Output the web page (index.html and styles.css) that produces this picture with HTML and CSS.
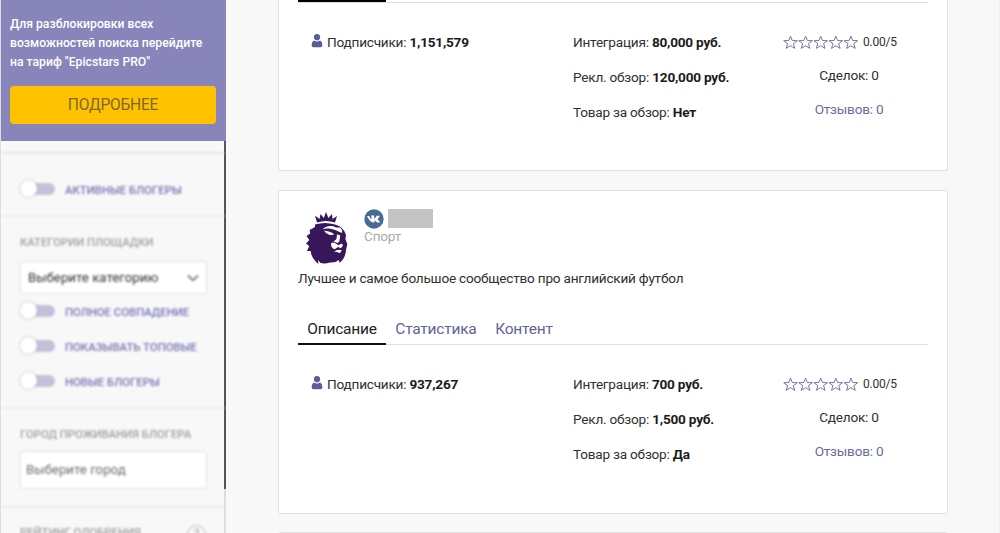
FILE: index.html
```html
<!DOCTYPE html>
<html lang="ru">
<head>
<meta charset="utf-8">
<title>Epicstars</title>
<link rel="stylesheet" href="styles.css">
</head>
<body>
<svg class="defs" width="0" height="0" aria-hidden="true">
  <symbol id="user" viewBox="0 0 11 14"><circle cx="5.5" cy="3.2" r="3.1"/><path d="M2.3 6.4Q5.5 8.7 8.7 6.4Q10.9 7.5 10.9 11Q10.9 13.2 9 13.2H2Q.1 13.2 .1 11Q.1 7.5 2.3 6.4Z"/></symbol>
  <symbol id="stars" viewBox="0 0 76 15">
    <g fill="none" stroke="#7477a0" stroke-width="1">
      <path id="star" d="M7.5 1.2L9.3 5.5L14.3 5.7L10.4 8.6L11.8 13.4L7.5 10.7L3.2 13.4L4.6 8.6L.7 5.7L5.7 5.5Z"/>
      <use href="#star" x="15.1"/><use href="#star" x="30.2"/><use href="#star" x="45.3"/><use href="#star" x="60.4"/>
    </g>
  </symbol>
</svg>
<div class="page">
  <aside class="sidebar">
    <section class="promo">
      <p>Для разблокировки всех<br>возможностей поиска перейдите<br>на тариф "Epicstars PRO"</p>
      <button class="more">ПОДРОБНЕЕ</button>
    </section>
    <div class="filters">
      <div class="filter-body">
        <section class="group active-group"><div class="toggle"><i class="switch"></i><span>АКТИВНЫЕ БЛОГЕРЫ</span></div></section>
        <section class="group category-group">
          <h3>КАТЕГОРИИ ПЛОЩАДКИ</h3>
          <div class="select"><span>Выберите категорию</span><svg width="12" height="8" viewBox="0 0 12 8"><path d="M1 1.5L6 6.3L11 1.5" fill="none" stroke="#777" stroke-width="1.8"/></svg></div>
          <div class="toggle"><i class="switch"></i><span>ПОЛНОЕ СОВПАДЕНИЕ</span></div>
          <div class="toggle"><i class="switch"></i><span>ПОКАЗЫВАТЬ ТОПОВЫЕ</span></div>
          <div class="toggle"><i class="switch"></i><span>НОВЫЕ БЛОГЕРЫ</span></div>
        </section>
        <section class="group city-group">
          <h3>ГОРОД ПРОЖИВАНИЯ БЛОГЕРА</h3>
          <div class="input">Выберите город</div>
        </section>
        <section class="group rating-group"><h3>РЕЙТИНГ ОДОБРЕНИЯ</h3><span class="help">?</span></section>
      </div>
      <div class="scrollbar"></div>
    </div>
  </aside>
  <main class="results">
    <article class="card first">
      <nav class="tabs"><a class="tab current"></a></nav>
      <div class="details">
        <div class="followers"><svg class="user"><use href="#user"/></svg><span>Подписчики: <b>1,151,579</b></span></div>
        <div class="prices"><p>Интеграция: <b>80,000 руб.</b></p><p>Рекл. обзор: <b>120,000 руб.</b></p><p>Товар за обзор: <b>Нет</b></p></div>
        <div class="rating"><div class="score"><svg class="stars"><use href="#stars"/></svg><span>0.00/5</span></div><p>Сделок: 0</p><a>Отзывов: 0</a></div>
      </div>
    </article>
    <article class="card second">
      <header class="profile">
        <svg class="avatar" viewBox="0 0 42 54">
          <path fill="#37165a" d="M11 10.5L9 3.5L13.5 7L14.5 2L17.8 6L20 0L22.4 6L26 2L26.5 7L31 4L29 10.5Q20 7.5 11 10.5Z"/>
          <path fill="#37165a" d="M9 12.5Q19 9.5 29 12.5Q38 15 40 23L39.4 27L41.3 32L40 38Q39.5 46 33.5 51L33 48Q29 51 24 50.5Q19 52 14.5 51L12 48L12.4 52Q5.2 46 4.7 39L1 39L3.2 34L0 31.5L3.3 28L.5 24L4.2 21.5L3.6 18L9 15Z"/>
          <g fill="#fff"><path d="M16.5 17.5Q20 13 27.5 14.2L30 15.5L34 15.5Q37 18 36 21L32.5 19.5Q28 17.2 23 16.5Q19 16 16.5 17.5Z"/><path d="M18 18.8Q24 18.8 28.3 22.3Q26 23.6 23.2 22.8Q20 22 18 18.8Z"/><path d="M31 22.3L34.3 23.5L33.3 29.5L31.5 31L27.5 29.5L30.5 27Z"/><path d="M25 31.2Q27.5 29.3 31 32.2L32.2 33.2L35.8 31.5L37 33.5L35 36.2L32.2 35L28.5 37.2Q25 36.3 25 31.2Z"/><path d="M28 39.8Q31.5 36.8 35.8 38.3L33.8 41.2Q31 39.2 28 39.8Z"/></g>
        </svg>
        <div class="identity">
          <div class="account"><svg class="vk" viewBox="0 0 20 20"><circle cx="10" cy="10" r="9.7" fill="#466c96"/><path fill="#fff" d="M3 7H5.3Q6 9.3 7.2 10.2Q8 9.4 7.2 7L6.8 6.5H10.2V9.8Q11.7 8.7 12.7 6.8H15.7Q15.8 8 13.5 10.3Q15.9 12.4 15.9 13.5H13.1Q11.7 12 10.7 11.5L10.3 13.6Q6.2 14 3 7Z"/></svg><span class="masked"></span></div>
          <span class="topic">Спорт</span>
        </div>
      </header>
      <p class="description">Лучшее и самое большое сообщество про английский футбол</p>
      <nav class="tabs"><a class="tab current">Описание</a><a class="tab">Статистика</a><a class="tab">Контент</a></nav>
      <div class="details">
        <div class="followers"><svg class="user"><use href="#user"/></svg><span>Подписчики: <b>937,267</b></span></div>
        <div class="prices"><p>Интеграция: <b>700 руб.</b></p><p>Рекл. обзор: <b>1,500 руб.</b></p><p>Товар за обзор: <b>Да</b></p></div>
        <div class="rating"><div class="score"><svg class="stars"><use href="#stars"/></svg><span>0.00/5</span></div><p>Сделок: 0</p><a>Отзывов: 0</a></div>
      </div>
    </article>
    <article class="card next"></article>
  </main>
</div>
</body>
</html>
```
FILE: styles.css
```css
* { box-sizing: border-box; }
body { margin: 0; height: 533px; overflow: hidden; background: #f8f8f8; color: #303030; font: 13.6px Roboto, "Liberation Sans", sans-serif; letter-spacing: -.22px; }
p, h3 { margin: 0; }
b { font-weight: 700; color: #1b1b1b; }
.defs { display: block; }
.page { display: flex; height: 533px; border-right: 1px solid #eeeeee; }
.sidebar { width: 226px; flex: none; height: 533px; overflow: hidden; border-left: 1px solid #dedee2; letter-spacing: 0; }
.promo { height: 141px; padding: 15px 9px 0; background: #8785ba; color: #fff; }
.promo p { height: 71px; font-size: 12.2px; font-weight: 500; line-height: 19px; white-space: nowrap; }
.more { display: block; width: 206px; height: 38px; padding: 0 0 1px; border: 0; border-radius: 4px; background: #ffc200; color: #806628; font: 15.6px Roboto, sans-serif; letter-spacing: -.25px; }
.filters { display: flex; height: 392px; }
.filter-body { width: 223px; filter: blur(.8px); }
.scrollbar { width: 2px; height: 392px; background: linear-gradient(#55555b 348px, #dedede 348px); }
.group { padding: 0 18px 0 19px; border-bottom: 2px solid #ececef; }
.group h3 { color: #a0a0a0; font-size: 11.3px; font-weight: 500; line-height: 16px; white-space: nowrap; }
.active-group { height: 65px; margin-top: 11px; padding-top: 17px; border-top: 2px solid #e8e8ee; }
.toggle { display: flex; align-items: center; height: 35px; gap: 10px; color: #7674b4; font-size: 11.35px; font-weight: 500; white-space: nowrap; }
.toggle span { padding-top: 2px; }
.switch { width: 35px; height: 12px; border-radius: 6px; background: #c6bfd9; display: flex; align-items: center; }
.switch::before { content: ""; width: 17px; height: 17px; flex: none; border-radius: 50%; background: #fff; box-shadow: 0 0 2px #999; }
.category-group { height: 192px; padding-top: 18px; }
.select, .input { width: 187px; background: #fff; border: 1px solid #e2e2e2; border-radius: 3px; color: #333; font-size: 13.25px; }
.select { display: flex; align-items: center; justify-content: space-between; height: 33px; margin: 10px 0 -1px; padding: 0 7px; }
.select span { padding-bottom: 1px; }
.city-group { height: 99px; padding-top: 18px; }
.input { height: 38px; margin-top: 8px; padding-left: 5px; color: #6c6c6c; line-height: 35px; }
.rating-group { display: flex; justify-content: space-between; padding-top: 17px; }
.help { width: 19px; height: 19px; border: 1px solid #bbb; border-radius: 50%; color: #aaa; font-size: 12px; line-height: 17px; text-align: center; }
.results { width: 670px; flex: none; margin-left: 52px; }
.card { background: #fff; border: 1px solid #e1e1e1; border-radius: 3px; padding: 0 19px; }
.first { height: 171px; border-top: 0; border-radius: 0 0 3px 3px; }
.second { height: 324px; margin-top: 19px; padding-top: 18px; }
.next { height: 20px; margin-top: 18px; }
.tabs { display: flex; height: 30px; border-bottom: 1px solid #dedede; font-size: 15.5px; }
.tab { padding: 0 9.3px; color: #61639a; line-height: 28px; }
.tab.current { width: 88px; height: 30px; border-bottom: 2px solid #111; color: #222; }
.first .tabs { height: 3px; }
.first .current { height: 2px; border: 0; background: #000; }
.details { display: grid; grid-template-columns: 275px 210px 113px; padding-top: 22px; line-height: 35px; white-space: nowrap; }
.followers { display: flex; align-items: center; height: 35px; padding-left: 13px; gap: 4px; }
.user { width: 12px; height: 14px; margin-bottom: 3px; fill: #5b5d99; }
.rating { text-align: center; }
.rating p, .rating a { display: block; margin-left: 19px; }
.rating p { line-height: 30px; }
.rating a { color: #696b9e; line-height: 38px; }
.score { display: flex; align-items: center; height: 35px; gap: 4px; font-size: 12px; }
.stars { width: 76px; height: 15px; flex: none; margin-bottom: 1px; }
.profile { display: flex; height: 59px; gap: 16px; padding-left: 8px; }
.avatar { width: 42px; height: 54px; flex: none; margin-top: 3px; }
.account { display: flex; gap: 4px; height: 19px; }
.vk { width: 20px; height: 20px; flex: none; }
.masked { width: 45px; height: 19px; background: #c3c3c3; }
.topic { display: block; color: #aaa; line-height: 17px; }
.description { height: 47px; line-height: 20px; }
```
